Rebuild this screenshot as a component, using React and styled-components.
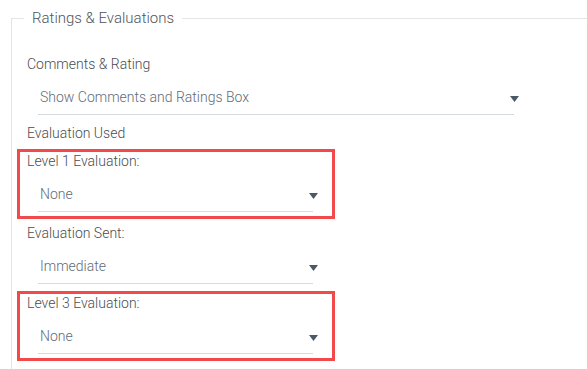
import React from "react";
import styled, { createGlobalStyle } from "styled-components";

const Global = createGlobalStyle`
  html, body {
    margin: 0;
    padding: 0;
    background: #ffffff;
    overflow: hidden;
  }
  body {
    font-family: Roboto, "Liberation Sans", Arial, sans-serif;
  }
`;

const Page = styled.div`
  width: 587px;
  height: 369px;
  overflow: hidden;
  padding-top: 9px;
  box-sizing: border-box;
`;

const Fieldset = styled.fieldset`
  margin: 0 0 0 11px;
  padding: 0 0 0 15px;
  border: 1px solid #e2e4e6;
  width: 620px;
  height: 420px;
  box-sizing: border-box;
  min-width: 0;
`;

const Legend = styled.legend`
  font-size: 15px;
  line-height: 18px;
  color: #4f5458;
  padding: 0 8px;
  margin-left: -3px;
  font-weight: 300;
`;

const Label = styled.div`
  font-size: 14px;
  line-height: 16px;
  font-weight: 300;
  color: #4a4d50;
  margin-top: ${(p) => p.$mt ?? 0}px;
`;

const Select = styled.div`
  display: flex;
  align-items: center;
  justify-content: space-between;
  margin-left: 11px;
  width: ${(p) => p.$w}px;
  box-sizing: border-box;
  padding: 15px 0 7px 2px;
  border-bottom: 1px solid #d3dae0;
`;

const Value = styled.span`
  font-size: 14px;
  line-height: 20px;
  font-weight: 300;
  color: #5f6c78;
`;

const Arrow = styled.svg`
  width: 9px;
  height: 6px;
  margin-right: -5px;
  margin-top: 3px;
  flex: none;
`;

const Highlight = styled.div`
  border: 3px solid #f24a4a;
  margin: ${(p) => p.$mt}px 0 0 -10px;
  padding: 1px 0 4px 7px;
  width: 318px;
  box-sizing: border-box;
`;

function Dropdown({ value, width }) {
  return (
    <Select $w={width}>
      <Value>{value}</Value>
      <Arrow viewBox="0 0 9 6">
        <path d="M0 0 H9 L4.5 6 Z" fill="#4b5866" />
      </Arrow>
    </Select>
  );
}

export default function App() {
  return (
    <>
      <Global />
      <Page>
        <Fieldset>
          <Legend>Ratings &amp; Evaluations</Legend>
          <Label $mt={29}>Comments &amp; Rating</Label>
          <Dropdown value="Show Comments and Ratings Box" width={476} />
          <Label $mt={10}>Evaluation Used</Label>
          <Highlight $mt={8}>
            <Label>Level 1 Evaluation:</Label>
            <Dropdown value="None" width={275} />
          </Highlight>
          <Label $mt={6}>Evaluation Sent:</Label>
          <Dropdown value="Immediate" width={275} />
          <Highlight $mt={7}>
            <Label>Level 3 Evaluation:</Label>
            <Dropdown value="None" width={275} />
          </Highlight>
        </Fieldset>
      </Page>
    </>
  );
}
